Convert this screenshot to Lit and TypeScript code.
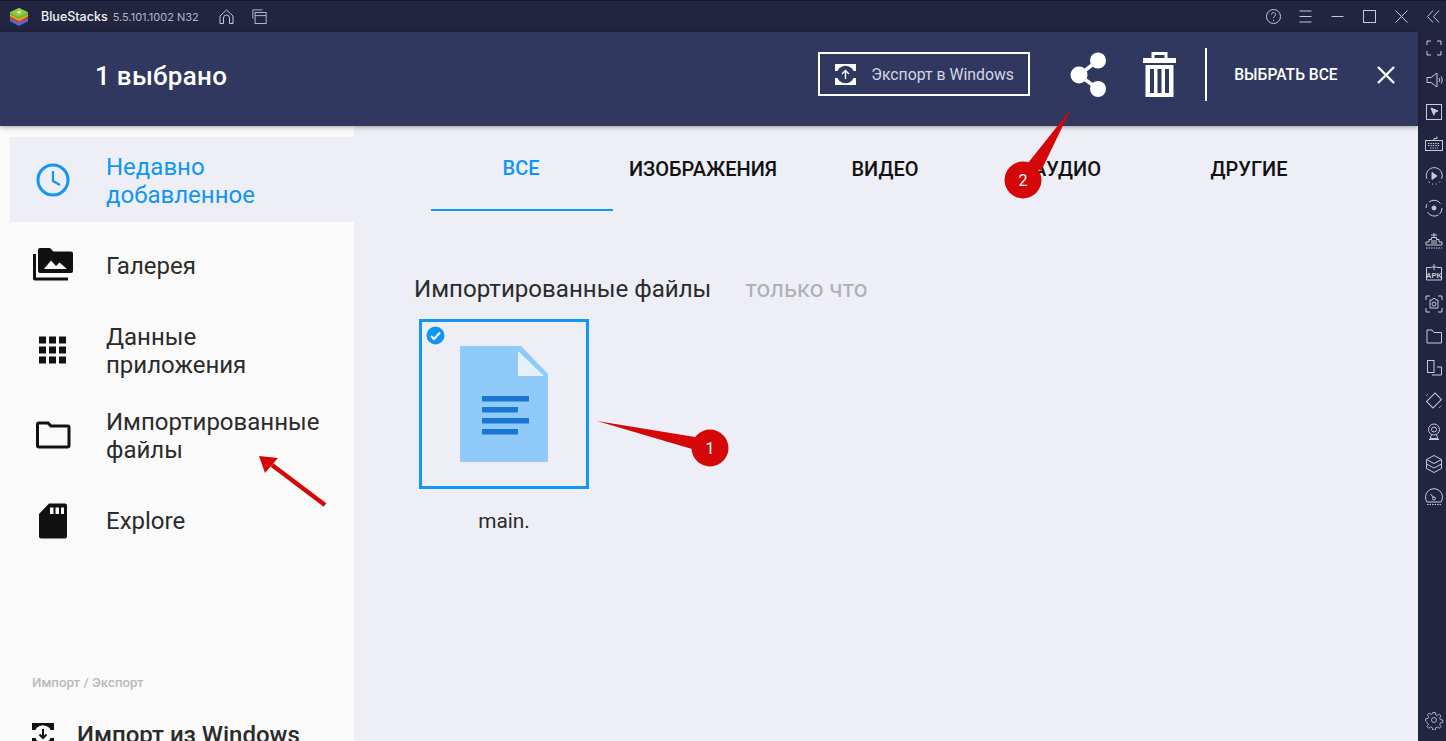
import { LitElement, html, css, svg } from "lit";
import { customElement } from "lit/decorators.js";

const FONT = css`Roboto, "Noto Sans", sans-serif`;

const sideIcons = [
  svg`<path d="M5 9V5h4M15 5h4v4M5 15v4h4M15 19h4v-4" />`,
  svg`<path d="M5 9.5h4l6-4.5v14l-6-4.5H5zM17 10c1 1 1 3 0 4M19 8.5c1.6 2 1.6 5 0 7" />`,
  svg`<rect x="4.5" y="4.5" width="15" height="15" /><path d="M9 8l7 3-3 1.2-1.2 3z" fill="#c9cbd8" />`,
  svg`<rect x="3.5" y="8.5" width="17" height="10" /><path d="M12 8.5V6.5h3V4.5" /><path d="M6 11.500h12M6 13.500h12M8 16h8" stroke-dasharray="1.400 1" />`,
  svg`<path d="M5 15A8 8 0 1 1 19.500 15M6.500 17.500l1.500 1.300M10 20h1M13.500 20h1M17 18.500l1-1" /><path d="M10 8.500l5 3.500-5 3.500z" fill="#c9cbd8" />`,
  svg`<path d="M7 6a8 8 0 0 1 11.500 1.500M20 12a8 8 0 0 1-2.500 6M16.500 19a8 8 0 0 1-11-3M4 12a8 8 0 0 1 1-4" /><circle cx="12" cy="12" r="2" fill="#c9cbd8" />`,
  svg`<path d="M4 17v-3h3v-2.500h2.500V9.500h5v2H17V14h3v3zM12 9.500V5M9 7h6M10 12v4M12 12v4M14 12v4" /><path d="M4 20h16" stroke-dasharray="1.500 1" />`,
  svg`<path d="M4.500 7.500h5M14.500 7.500h5M4.500 7.500V20h15V7.500M12 4v6M9.500 7h5" /><text x="12" y="18" font-size="7.500" font-weight="700" text-anchor="middle" fill="#c9cbd8" stroke="none" font-family="Liberation Sans, sans-serif">APK</text>`,
  svg`<path d="M4 8V4h4M16 4h4v4M4 16v4h4M16 20h4v-4M8 8h2l1-1.500h2L14 8h2v8H8z" /><circle cx="12" cy="12" r="2" />`,
  svg`<path d="M5 6h5l2 2.500h7.500V19H5z" />`,
  svg`<rect x="5.500" y="4.500" width="6.500" height="12" /><path d="M15 11h4.500v8H10" />`,
  svg`<rect x="6" y="8" width="12" height="9" transform="rotate(-45 12 12.500)" /><path d="M4 8l3-3M17 20l3-3" stroke-dasharray="1 1" />`,
  svg`<circle cx="12" cy="9.500" r="5.500" /><circle cx="12" cy="9.500" r="2.500" /><path d="M9.500 15l-1.500 3.500h8L14.500 15M7 19.500h10" />`,
  svg`<path d="M12 3.500l7.500 4-7.500 4-7.500-4zM4.500 7.500v9l7.500 4 7.500-4v-9M4.500 12l7.500 4 7.500-4" />`,
  svg`<path d="M5 18a8.500 8.500 0 1 1 14 0zM12 14l-3.500-4" /><circle cx="12" cy="14.500" r="1.500" /><path d="M5 20.500h14" stroke-dasharray="1.500 1" />`,
];

@customElement("app-root")
export class AppRoot extends LitElement {
  static styles = css`
    :host {
      display: block;
      width: 1446px;
      height: 741px;
      overflow: hidden;
      position: relative;
      background: #edeef6;
      font-family: ${FONT};
    }
    .frame {
      display: grid;
      grid-template-columns: 1fr 28px;
      grid-template-rows: 32px 1fr;
      height: 741px;
    }
    .titlebar {
      grid-column: 1 / 3;
      background: #22253f;
      border-top: 1px solid #14152a;
      box-sizing: border-box;
      display: flex;
      align-items: center;
      padding: 0 4px 0 9px;
      color: #fff;
    }
    .logo { width: 20px; height: 20px; margin-right: 12px; flex: none; }
    .brand { font-family: Inter, ${FONT}; font-size: 12.5px; color: #f2f3f8; font-weight: 500; }
    .version { font-family: Inter, ${FONT}; font-size: 11px; color: #b4b6c4; margin-left: 5px; }
    .tb-icon { width: 17px; height: 17px; fill: none; stroke: #c6c8d4; stroke-width: 1; flex: none; }
    .home { margin-left: 19px; }
    .pages { margin-left: 17px; width: 15px; height: 15px; }
    .spacer { flex: 1; }
    .controls { display: flex; gap: 15px; align-items: center; }
    .rail {
      grid-column: 2;
      grid-row: 2;
      background: #22253f;
      display: flex;
      flex-direction: column;
      align-items: center;
      padding-left: 4px;
    }
    .rail-list { display: flex; flex-direction: column; gap: 8px; padding-top: 4px; }
    .rail-list svg, .gear {
      width: 24px;
      height: 24px;
      fill: none;
      stroke: #c9cbd8;
      stroke-width: 1;
      display: block;
    }
    .gear { margin-top: auto; margin-bottom: 11px; width: 20px; height: 20px; }
    .main { grid-column: 1; grid-row: 2; display: flex; flex-direction: column; min-height: 0; }
    .appbar {
      height: 94px;
      box-sizing: border-box;
      padding-bottom: 10px;
      flex: none;
      background: #303860;
      display: flex;
      align-items: center;
      color: #fff;
      box-shadow: 0 1px 5px rgba(0,0,0,.35);
      position: relative;
      z-index: 1;
    }
    .count { font-size: 26px; font-weight: 500; margin: 4px 0 0 95px; letter-spacing: .3px; }
    .export {
      margin-left: 591px;
      width: 212px;
      height: 44px;
      box-sizing: border-box;
      border: 2px solid #fff;
      display: flex;
      align-items: center;
      padding: 1px 0 0 15px;
      font-size: 15.8px;
      color: #d4d6e0;
      white-space: nowrap;
    }
    .export svg { width: 21px; height: 21px; margin-right: 15px; flex: none; }
    .share { width: 38px; height: 46px; margin-left: 40px; fill: #fff; flex: none; }
    .trash { width: 33px; height: 46px; margin-left: 35px; flex: none; }
    .divider { width: 2px; height: 53px; background: #fff; margin-left: 29px; flex: none; }
    .select-all { font-size: 15.6px; font-weight: 500; margin: 2px 0 0 27px; white-space: nowrap; }
    .close { width: 20px; height: 20px; margin: 2px 0 0 38px; flex: none; stroke: #fff; stroke-width: 2.4; fill: none; }
    .body { flex: 1; display: grid; grid-template-columns: 354px 1fr; min-height: 0; }
    .side {
      background: #fafafa;
      padding: 11px 0 0 10px;
      display: flex;
      flex-direction: column;
      overflow: hidden;
    }
    .item {
      display: flex;
      align-items: center;
      font-size: 24px;
      line-height: 28px;
      color: #2b2b2b;
      height: 85px;
      flex: none;
    }
    .item.active { background: #edeef6; color: #1296f3; }
    .item .ic { width: 96px; flex: none; display: flex; justify-content: center; padding-right: 10px; box-sizing: border-box; }
    .item .txt { padding-top: 2px; }
    .ic svg { width: 40px; height: 40px; display: block; }
    .label-group {
      font-size: 13.3px;
      font-weight: 500;
      color: #b9b9bf;
      margin: auto 0 0 22px;
      line-height: 14px;
    }
    .import {
      display: flex;
      align-items: flex-start;
      margin: 31px 0 -2px 22px;
      font-size: 24px;
      font-weight: 500;
      color: #2b2b2b;
      line-height: 28px;
      height: 22px;
      flex: none;
    }
    .import svg { width: 22px; height: 22px; margin: 2px 23px 0 0; flex: none; }
    .content { display: flex; flex-direction: column; }
    .tabs { display: flex; height: 85px; margin-left: 77px; flex: none; }
    .tab {
      font-size: 20px;
      font-weight: 500;
      color: #111;
      display: flex;
      align-items: center;
      justify-content: center;
      box-sizing: border-box;
      width: 182px;
      height: 85px;
      padding: 1px 2px 0 0;
    }
    .tab.on { color: #1296f3; border-bottom: 2px solid #1296f3; }
    .heading { display: flex; align-items: baseline; margin: 64px 0 0 60px; font-size: 24.1px; color: #2b2b2b; line-height: 28px; }
    .when { color: #aeaeb4; margin-left: 34px; }
    .tile { margin: 16px 0 0 65px; width: 170px; }
    .thumb {
      width: 170px;
      height: 170px;
      box-sizing: border-box;
      border: 3px solid #1296f3;
      position: relative;
      display: flex;
      align-items: center;
      justify-content: center;
    }
    .thumb .doc { width: 88px; height: 116px; display: block; }
    .check { position: absolute; left: 4px; top: 4px; width: 19px; height: 19px; }
    .name { text-align: center; font-size: 20.8px; color: #2b2b2b; margin-top: 20px; line-height: 24px; }
    .overlay { position: absolute; left: 0; top: 0; width: 1446px; height: 741px; pointer-events: none; z-index: 5; }
    .num { font-family: Roboto, sans-serif; font-size: 16px; fill: #fff; text-anchor: middle; }
  `;

  render() {
    return html`
      <div class="frame">
        <div class="titlebar">
          <svg class="logo" viewBox="0 0 21 21">
            <path d="M1 15l9.500 5 9.500-5v-3H1z" fill="#3f6fd8" />
            <path d="M1 12l9.500 5 9.500-5V9H1z" fill="#e8372f" />
            <path d="M1 9.500l9.500 5 9.500-5V7H1z" fill="#f7c21b" />
            <path d="M10.500 1L20 5.500v3l-9.500 5L1 8.500v-3z" fill="#6cb83c" />
            <path d="M10.500 1L20 5.500l-9.500 4.500L1 5.500z" fill="#8fcb45" />
            <path d="M8 5.500l5-1.500-2 3z" fill="#f4f8e8" />
          </svg>
          <span class="brand">BlueStacks</span>
          <span class="version">5.5.101.1002 N32</span>
          <svg class="tb-icon home" viewBox="0 0 17 17"><path d="M2 8l6.500-6L15 8v7.500h-3.500V10a3 3 0 0 0-6 0v5.500H2z" /></svg>
          <svg class="tb-icon pages" viewBox="0 0 17 17"><path d="M1 11V1h11" /><rect x="3.500" y="4" width="12.500" height="12.500" /><path d="M3.500 7.500H16" /></svg>
          <div class="spacer"></div>
          <div class="controls">
            <svg class="tb-icon" viewBox="0 0 17 17"><circle cx="8.500" cy="8.500" r="7" /><path d="M6.500 6.500a2 2 0 1 1 3 1.800c-.8.5-1 1-1 1.900M8.500 12v1" /></svg>
            <svg class="tb-icon" viewBox="0 0 17 17"><path d="M2.500 3h12M2.500 8.500h12M2.500 14h12" /></svg>
            <svg class="tb-icon" viewBox="0 0 17 17"><path d="M2.500 8.500h12" /></svg>
            <svg class="tb-icon" viewBox="0 0 17 17"><rect x="2.500" y="2.500" width="12" height="12" /></svg>
            <svg class="tb-icon" viewBox="0 0 17 17"><path d="M2.500 2.500l12 12M14.500 2.500l-12 12" /></svg>
            <svg class="tb-icon" viewBox="0 0 17 17"><path d="M8 2.500L2.500 8.500 8 14.500M14 2.500L8.500 8.500 14 14.500" /></svg>
          </div>
        </div>
        <div class="main">
          <div class="appbar">
            <span class="count">1 выбрано</span>
            <div class="export">
              <svg viewBox="0 0 21 21">
                <rect width="21" height="21" fill="#fff" />
                <path d="M0 7h3v7H0zM18 7h3v7h-3z" fill="#303860" />
                <circle cx="10.500" cy="10.500" r="8.800" fill="#303860" />
                <path d="M10.500 15V6.500M7 10l3.500-3.500L14 10" stroke="#fff" stroke-width="1.300" fill="none" />
              </svg>
              Экспорт в Windows
            </div>
            <svg class="share" viewBox="0 0 38 46">
              <circle cx="9" cy="24" r="8.500" /><circle cx="28" cy="9.500" r="8" /><circle cx="28" cy="38" r="8" />
              <path d="M9 24L28 9.500M9 24l19 14" stroke="#fff" stroke-width="3.500" />
            </svg>
            <svg class="trash" viewBox="0 0 33 46">
              <path d="M10 8V2.500h13V8" fill="none" stroke="#fff" stroke-width="3" />
              <rect x="0" y="7" width="33" height="5" fill="#fff" />
              <path d="M2.500 14h28v32h-28z" fill="#fff" />
              <rect x="7" y="18" width="4" height="24" fill="#303860" />
              <rect x="14.500" y="18" width="4" height="24" fill="#303860" />
              <rect x="22" y="18" width="4" height="24" fill="#303860" />
            </svg>
            <div class="divider"></div>
            <span class="select-all">ВЫБРАТЬ ВСЕ</span>
            <svg class="close" viewBox="0 0 20 20"><path d="M2 2l16 16M18 2L2 18" /></svg>
          </div>
          <div class="body">
            <div class="side">
              <div class="item active">
                <div class="ic"><svg viewBox="0 0 40 40"><circle cx="20" cy="20" r="15" fill="none" stroke="#1296f3" stroke-width="3" /><path d="M20 11v10l7 4" fill="none" stroke="#1296f3" stroke-width="2.200" /></svg></div>
                <div class="txt">Недавно<br />добавленное</div>
              </div>
              <div class="item">
                <div class="ic"><svg viewBox="0 0 40 40"><path d="M0 9h3v23.500h32v3H2a2 2 0 0 1-2-2z" fill="#111" /><path d="M5 5a2 2 0 0 1 2-2h10l3.500 3.500H38a2 2 0 0 1 2 2V26a2 2 0 0 1-2 2H7a2 2 0 0 1-2-2z" fill="#111" /><path d="M11 24l7-8.500 5 5.500 3.500-3.500 7.500 6.500z" fill="#fafafa" /></svg></div>
                <div class="txt">Галерея</div>
              </div>
              <div class="item">
                <div class="ic"><svg viewBox="0 0 40 40">${[6.5, 16.5, 26.5].flatMap((y) => [6, 16, 26].map((x) => svg`<rect x=${x} y=${y} width="7" height="7" fill="#111" />`))}</svg></div>
                <div class="txt">Данные<br />приложения</div>
              </div>
              <div class="item">
                <div class="ic"><svg viewBox="0 0 40 40"><path d="M6 8h9l3 3h16.500a1.500 1.500 0 0 1 1.500 1.500v18a1.500 1.500 0 0 1-1.500 1.500H6A1.500 1.500 0 0 1 4.500 30.500v-21A1.500 1.500 0 0 1 6 8z" fill="none" stroke="#111" stroke-width="3" /></svg></div>
                <div class="txt">Импортированные<br />файлы</div>
              </div>
              <div class="item">
                <div class="ic"><svg viewBox="0 0 40 40"><path d="M16 3.500h16a2 2 0 0 1 2 2v31a2 2 0 0 1-2 2H8a2 2 0 0 1-2-2V14z" fill="#111" /><path d="M17 7.500h3.500V14H17zM22.500 7.500H26V14h-3.500zM28 7.500h3V14h-3z" fill="#fafafa" /></svg></div>
                <div class="txt">Explore</div>
              </div>
              <div class="label-group">Импорт / Экспорт</div>
              <div class="import">
                <svg viewBox="0 0 22 22">
                  <rect width="22" height="22" fill="#111" />
                  <path d="M0 7h3v8H0zM19 7h3v8h-3z" fill="#fafafa" />
                  <circle cx="11" cy="11" r="8.800" fill="#fafafa" />
                  <path d="M11 6v9M7.500 11.500L11 15l3.500-3.500" stroke="#111" stroke-width="2" fill="none" />
                </svg>
                Импорт из Windows
              </div>
            </div>
            <div class="content">
              <div class="tabs">
                <div class="tab on">ВСЕ</div>
                <div class="tab">ИЗОБРАЖЕНИЯ</div>
                <div class="tab">ВИДЕО</div>
                <div class="tab">АУДИО</div>
                <div class="tab">ДРУГИЕ</div>
              </div>
              <div class="heading"><span>Импортированные файлы</span><span class="when">только что</span></div>
              <div class="tile">
                <div class="thumb">
                  <svg class="check" viewBox="0 0 19 19"><circle cx="9.500" cy="9.500" r="9" fill="#1296f3" /><path d="M5 10l3 3 6-6.500" stroke="#fff" stroke-width="2" fill="none" /></svg>
                  <svg class="doc" viewBox="0 0 88 116">
                    <path d="M0 0h61l27 28v88H0z" fill="#90caf9" />
                    <path d="M58 5v25h26z" fill="#e3f2fd" />
                    <path d="M22 50h47v5.500H22zM22 61h36v5.500H22zM22 72h47v5.500H22zM22 83h36v5.500H22z" fill="#1976d2" />
                  </svg>
                </div>
                <div class="name">main.</div>
              </div>
            </div>
          </div>
        </div>
        <div class="rail">
          <div class="rail-list">${sideIcons.map((p) => html`<svg viewBox="0 0 24 24">${p}</svg>`)}</div>
          <svg class="gear" viewBox="0 0 24 24"><circle cx="12" cy="12" r="3" /><path d="M10.500 3h3l.5 2.800 2 .9 2.400-1.600 2 2-1.600 2.400.9 2 2.800.5v3l-2.800.5-.9 2 1.600 2.400-2 2-2.400-1.600-2 .9-.5 2.800h-3l-.5-2.800-2-.9-2.400 1.600-2-2 1.600-2.400-.9-2L2 13.500v-3l2.800-.5.900-2-1.600-2.400 2-2 2.400 1.600 2-.9z" /></svg>
        </div>
      </div>
      <svg class="overlay" viewBox="0 0 1446 741">
        <path d="M597 421L695 437 692 449z" fill="#d40808" />
        <circle cx="710" cy="448" r="18.500" fill="#d40808" />
        <text class="num" x="710" y="454">1</text>
        <path d="M1071 109L1028 163 1041 171z" fill="#d40808" />
        <circle cx="1023" cy="180" r="18.500" fill="#d40808" />
        <text class="num" x="1023" y="186">2</text>
        <path d="M325 505L272 465" stroke="#d40808" stroke-width="4.500" fill="none" />
        <path d="M259 456L278 458 265 473z" fill="#d40808" />
      </svg>
    `;
  }
}
